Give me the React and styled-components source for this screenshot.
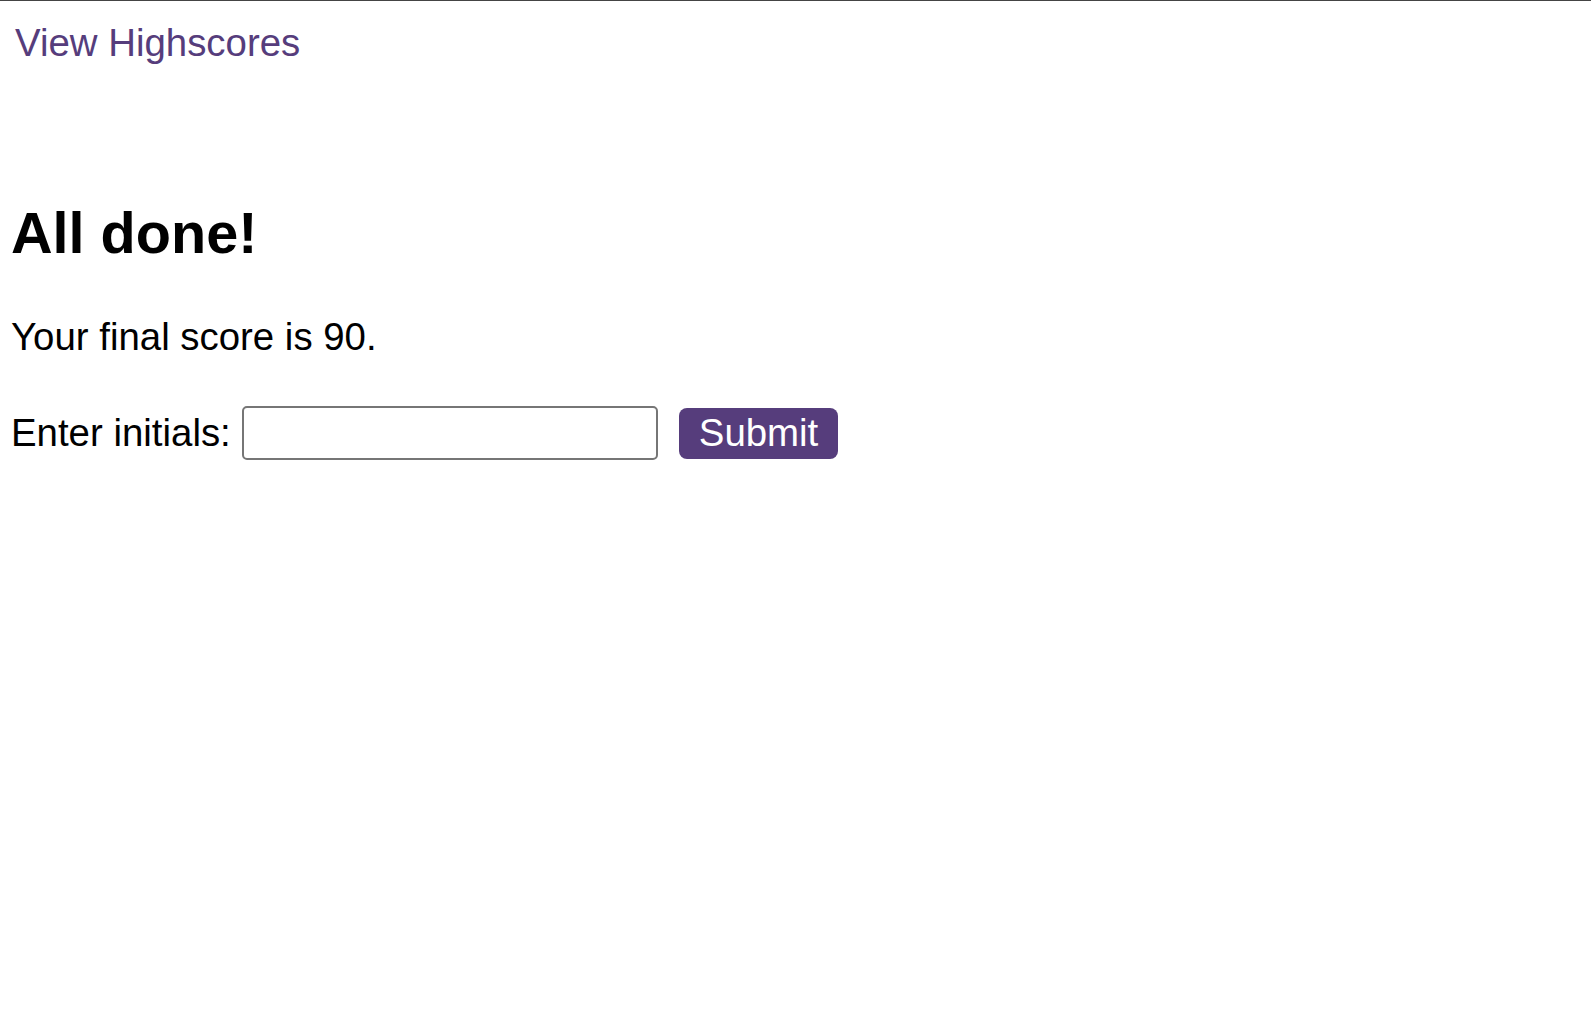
import styled, { createGlobalStyle } from "styled-components";

const GlobalStyle = createGlobalStyle`
    html, body {
        margin: 0;
        padding: 0;
        background: #fff;
    }

    body {
        font-family: "Liberation Sans", Arial, sans-serif;
        font-size: 38.4px;
        color: #000;
        border-top: 1px solid #444;
    }
`;

const Header = styled.header`
    padding: 20px 0 0 15px;
    line-height: normal;
`;

const ScoresLink = styled.a`
    color: #563d7c;
    text-decoration: none;
    cursor: pointer;
`;

const Main = styled.main`
    padding: 0 0 0 11px;
`;

const Title = styled.h1`
    margin: 135px 0 0;
    font-size: 57.6px;
    font-weight: bold;
    line-height: normal;
`;

const Score = styled.p`
    margin: 49px 0 0;
    line-height: normal;
`;

const Form = styled.form`
    display: flex;
    align-items: center;
    margin-top: 47px;
`;

const Label = styled.label`
    line-height: normal;
`;

const Input = styled.input`
    box-sizing: border-box;
    width: 416px;
    height: 54px;
    margin-left: 11px;
    border: 2px solid #767676;
    border-radius: 5px;
    font: inherit;
    padding: 0 6px;
    background: #fff;
`;

const SubmitButton = styled.button`
    height: 51px;
    margin-left: 21px;
    padding: 0 20px;
    border: none;
    border-radius: 8px;
    background: #563d7c;
    color: #fff;
    font-family: "Liberation Sans", Arial, sans-serif;
    font-size: 38.4px;
    line-height: normal;
    cursor: pointer;
`;

const App = () => {
    return (
        <>
            <GlobalStyle />
            <Header>
                <ScoresLink>View Highscores</ScoresLink>
            </Header>
            <Main>
                <Title>All done!</Title>
                <Score>Your final score is 90.</Score>
                <Form onSubmit={e => e.preventDefault()}>
                    <Label htmlFor="initials">Enter initials:</Label>
                    <Input id="initials" type="text" />
                    <SubmitButton type="submit">Submit</SubmitButton>
                </Form>
            </Main>
        </>
    );
};

export default App;
